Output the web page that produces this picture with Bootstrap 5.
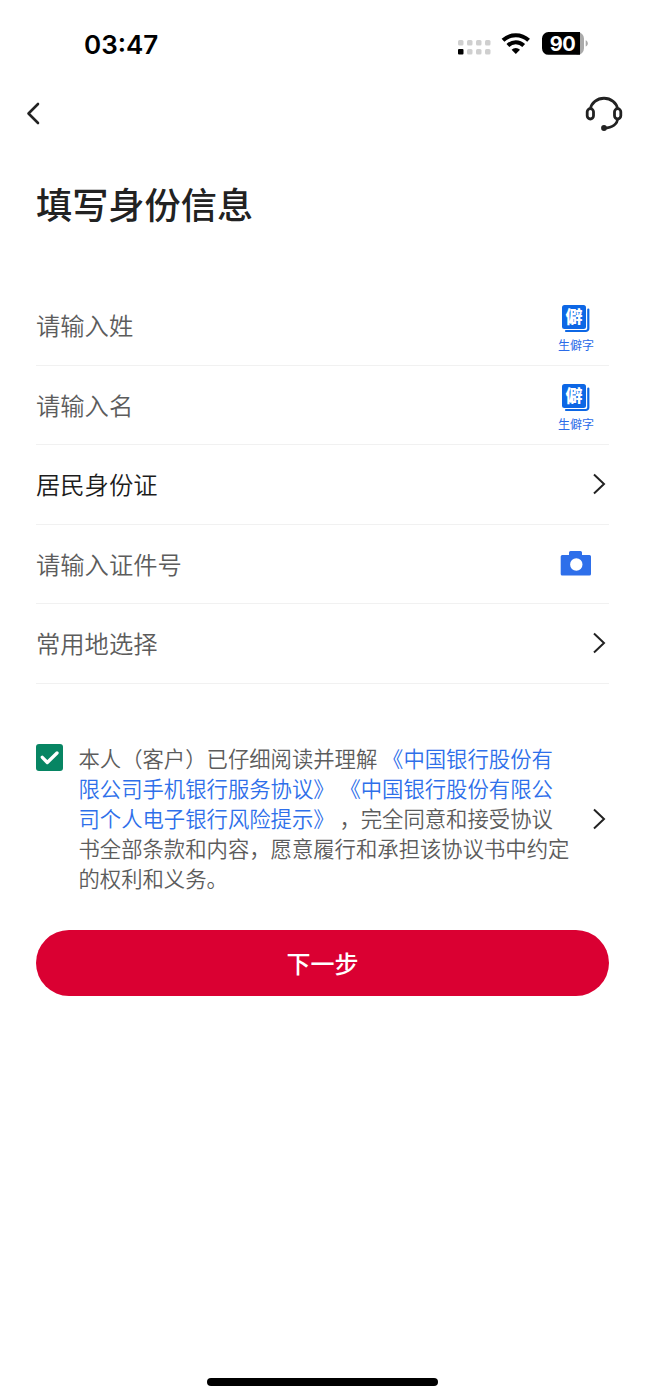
<!DOCTYPE html>
<html lang="zh-CN">
<head>
<meta charset="utf-8">
<meta name="viewport" content="width=device-width, initial-scale=1">
<title>填写身份信息</title>
<link href="https://cdn.jsdelivr.net/npm/bootstrap@5.3.0/dist/css/bootstrap.min.css" rel="stylesheet">
<style>
  body { font-family: Inter, "Noto Sans CJK SC", sans-serif; color: #222; background: #fff; text-spacing-trim: space-all; }
  svg { display: block; flex: none; }
  .screen { height: 1398px; padding: 0 36px; overflow: hidden; }
  .statusbar { height: 88px; margin: 0 -36px; padding: 0 57px 0 84px; color: #000; }
  .clock { font-size: 26px; font-weight: 600; line-height: 1; padding-top: 1px; }
  .topbar { height: 52px; margin: 0 -36px; padding: 0 22px 0 26px; }
  .page-title { font-family: "Noto Sans CJK SC", sans-serif; font-size: 36.2px; font-weight: 500; line-height: 54px; margin: 36px 0 56px; }
  .field { height: 79.5px; border-bottom: 1.5px solid #f1f1f1; font: 350 24.3px/36px "Noto Sans CJK SC", sans-serif; color: #5c5c5c; }
  .field .chosen { color: #1c1c1c; }
  .rare { width: 40px; margin: 4px 13px 0 0; color: #2b6be8; font-size: 12px; font-weight: 400; line-height: 16px; }
  .rare-key { font: 900 17px "Noto Sans CJK SC", sans-serif; }
  .agree { margin-top: 60px; font: 350 21.35px/30px "Noto Sans CJK SC", sans-serif; color: #5c5c5c; }
  .agree a { color: #2e6fea; }
  .terms { margin: -1px 0 1px 15.5px; }
  .tick { width: 27px; height: 27px; border-radius: 3px; background: #078563; }
  .next-step { height: 66px; margin-top: 36px; background: #da0032; color: #fff; font: 500 24px/1 "Noto Sans CJK SC", sans-serif; }
  .home-bar { width: 231px; height: 7.5px; background: #000; margin-bottom: 12.5px; }
</style>
</head>
<body>
<main class="screen d-flex flex-column">
  <div class="statusbar d-flex align-items-center justify-content-between">
    <span class="clock">03:47</span>
    <svg width="132" height="26" viewBox="0 0 132 26">
      <g fill="#cfcfcf">
        <rect x="2" y="9" width="5.5" height="5.5" rx="1.5"/><rect x="11" y="9" width="5.5" height="5.5" rx="1.5"/><rect x="20" y="9" width="5.5" height="5.5" rx="1.5"/><rect x="29" y="9" width="5.5" height="5.5" rx="1.5"/>
        <rect x="11" y="18" width="5.5" height="5.5" rx="1.5"/><rect x="20" y="18" width="5.5" height="5.5" rx="1.5"/><rect x="29" y="18" width="5.5" height="5.5" rx="1.5"/>
      </g>
      <rect x="2" y="18" width="5.5" height="5.5" rx="1"/>
      <g fill="none" stroke="#000" stroke-width="4"><path d="M47 9.300a18.600 18.600 0 0 1 25.600 0"/><path d="M51.900 14.500a11.300 11.300 0 0 1 15.800 0"/></g>
      <path d="M59.800 23l-4.200-4.200a6 6 0 0 1 8.400 0z"/>
      <path d="M121.500 1h-1v22.800h1a6.500 6.500 0 0 0 6.500-6.500v-9.800a6.500 6.500 0 0 0-6.500-6.500z" fill="#aaa"/>
      <path d="M129.700 9.300c2.800 1 2.800 5.200 0 6.200z" fill="#aaa"/>
      <path d="M92.500 1H124v22.800H92.500a6.500 6.500 0 0 1-6.500-6.500V7.500A6.500 6.500 0 0 1 92.500 1z"/>
      <text x="106.500" y="19.500" text-anchor="middle" fill="#fff" font-family="Inter, sans-serif" font-weight="700" font-size="20" letter-spacing="-.4">90</text>
    </svg>
  </div>

  <nav class="topbar d-flex align-items-center justify-content-between">
    <svg width="16" height="24" viewBox="0 0 16 24" fill="none" stroke="#222" stroke-width="2.600" stroke-linecap="round" stroke-linejoin="round"><path d="M12 2L2.500 11.500 12 21"/></svg>
    <svg width="38" height="36" viewBox="0 0 38 36" fill="none" stroke="#222" stroke-width="2.800"><path d="M5.400 13a13.700 12.200 0 0 1 27.200 0M32.600 22c0 6-5 9.800-13.500 10.100"/><rect x="2.200" y="12.700" width="6.300" height="10.300" rx="3.150"/><rect x="29.500" y="12.700" width="6.300" height="10.300" rx="3.150"/><circle cx="19" cy="32" r="2.900" fill="#222" stroke="none"/></svg>
  </nav>

  <h1 class="page-title">填写身份信息</h1>

  <section>
    <div class="field d-flex align-items-center justify-content-between">
      <span>请输入姓</span>
      <div class="rare d-flex flex-column align-items-center">
        <svg width="28" height="31" viewBox="0 -3 28 31"><path d="M26.300 4.500v19a2.500 2.500 0 0 1-2.500 2.500H4" fill="none" stroke="#0d67e5" stroke-width="2.200" stroke-linecap="round"/><rect width="24" height="24" rx="2.500" fill="#0d67e5"/><text x="12" y="18.300" text-anchor="middle" fill="#fff" class="rare-key">僻</text></svg>
        <span class="mt-1">生僻字</span>
      </div>
    </div>
    <div class="field d-flex align-items-center justify-content-between">
      <span>请输入名</span>
      <div class="rare d-flex flex-column align-items-center">
        <svg width="28" height="31" viewBox="0 -3 28 31"><path d="M26.300 4.500v19a2.500 2.500 0 0 1-2.500 2.500H4" fill="none" stroke="#0d67e5" stroke-width="2.200" stroke-linecap="round"/><rect width="24" height="24" rx="2.500" fill="#0d67e5"/><text x="12" y="18.300" text-anchor="middle" fill="#fff" class="rare-key">僻</text></svg>
        <span class="mt-1">生僻字</span>
      </div>
    </div>
    <div class="field d-flex align-items-center justify-content-between">
      <span class="chosen">居民身份证</span>
      <svg width="17" height="22" viewBox="0 0 17 22" fill="none" stroke="#222" stroke-width="2"><path d="M2 1.500L12 11 2 20.500"/></svg>
    </div>
    <div class="field d-flex align-items-center justify-content-between">
      <span>请输入证件号</span>
      <svg width="49" height="28" viewBox="0 0 49 28"><path fill-rule="evenodd" fill="#2e6fea" d="M9 2.500A1.500 1.500 0 0 1 10.500 1h10A1.500 1.500 0 0 1 22 2.500V5h7.500A1.500 1.500 0 0 1 31 6.500v17.500a1.500 1.500 0 0 1-1.500 1.500h-27.300A1.500 1.500 0 0 1 .7 24V6.500A1.500 1.500 0 0 1 2.200 5H9zM16.300 8.300a6.200 6.200 0 1 0 0 12.400 6.200 6.200 0 0 0 0-12.400z"/></svg>
    </div>
    <div class="field d-flex align-items-center justify-content-between">
      <span>常用地选择</span>
      <svg width="17" height="22" viewBox="0 0 17 22" fill="none" stroke="#222" stroke-width="2"><path d="M2 1.500L12 11 2 20.500"/></svg>
    </div>
  </section>

  <section class="agree d-flex align-items-center">
    <div class="tick align-self-start d-flex align-items-center justify-content-center"><svg width="27" height="27" viewBox="0 0 27 27" fill="none" stroke="#fff" stroke-width="3.300" stroke-linecap="round" stroke-linejoin="round"><path d="M6.300 13.300l5 5.200 9.700-9.500"/></svg></div>
    <p class="terms flex-grow-1 text-nowrap">本人（客户）已仔细阅读并理解 <a class="text-decoration-none" href="#">《中国银行股份有<br>限公司手机银行服务协议》</a> <a class="text-decoration-none" href="#">《中国银行股份有限公<br>司个人电子银行风险提示》</a> ，完全同意和接受协议<br>书全部条款和内容，愿意履行和承担该协议书中约定<br>的权利和义务。</p>
    <svg width="17" height="22" viewBox="0 0 17 22" fill="none" stroke="#222" stroke-width="2"><path d="M2 1.500L12 11 2 20.500"/></svg>
  </section>

  <button type="button" class="next-step btn rounded-pill w-100 flex-shrink-0">下一步</button>
  <div class="home-bar rounded-pill mt-auto mx-auto"></div>
</main>
<script src="https://cdn.jsdelivr.net/npm/bootstrap@5.3.0/dist/js/bootstrap.bundle.min.js"></script>
</body>
</html>
